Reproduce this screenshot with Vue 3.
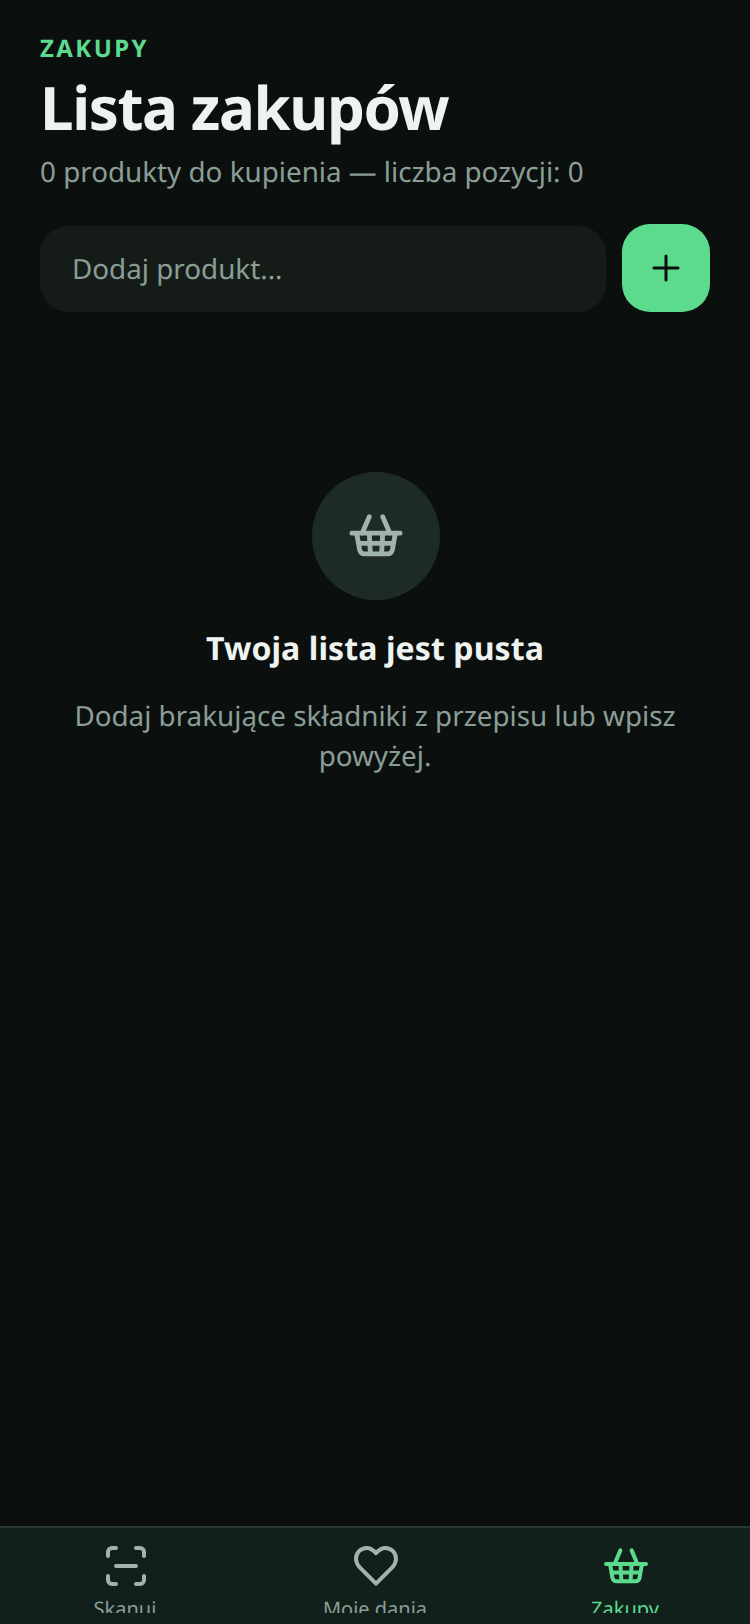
<template>
  <div class="screen">
    <main class="content">
      <header class="page-header">
        <div class="eyebrow">ZAKUPY</div>
        <h1 class="page-title">Lista zakupów</h1>
        <p class="page-sub">0 produkty do kupienia — liczba pozycji: 0</p>
      </header>

      <form class="add-row" @submit.prevent>
        <input v-model="draft" class="add-input" type="text" placeholder="Dodaj produkt..." />
        <button class="add-button" type="submit" aria-label="Dodaj">
          <svg width="28" height="28" viewBox="0 0 28 28" fill="none" stroke="#0a0f0e" stroke-width="3" stroke-linecap="round">
            <path d="M14 2v24M2 14h24" />
          </svg>
        </button>
      </form>

      <section class="empty">
        <div class="empty-circle">
          <svg class="basket" width="58" height="58" viewBox="0 0 24 24" fill="none" stroke="currentColor" stroke-width="2" stroke-linecap="round" stroke-linejoin="round">
            <path :d="basketPath" />
          </svg>
        </div>
        <h2 class="empty-title">Twoja lista jest pusta</h2>
        <p class="empty-text">Dodaj brakujące składniki z przepisu lub wpisz powyżej.</p>
      </section>
    </main>

    <nav class="tabbar">
      <div v-for="tab in tabs" :key="tab.id" class="tab" :class="{ active: tab.id === 'list' }">
        <svg class="tab-icon" width="48" height="48" viewBox="0 0 24 24" fill="none" stroke="currentColor" stroke-width="2" stroke-linecap="round" stroke-linejoin="round">
          <path :d="tab.icon" />
        </svg>
        <span class="tab-label">{{ tab.label }}</span>
      </div>
    </nav>
  </div>
</template>

<script setup>
import { ref } from 'vue'

const draft = ref('')

const basketPath = 'M6.3 10 9.2 3.2M17.700 10 14.800 3.200M2 10h20M4 10l1.200 6.800a2 2 0 0 0 2 1.800h9.600a2 2 0 0 0 2-1.800L20 10M4.800 14.200h14.400M9.200 10l.5 8.600M14.800 10l-.5 8.600'

const tabs = [
  { id: 'scan', label: 'Skanuj', icon: 'M3 6V4a2 2 0 0 1 2-2h2M17 2h2a2 2 0 0 1 2 2v2M21 16v2a2 2 0 0 1-2 2h-2M7 20H5a2 2 0 0 1-2-2v-2M7 11h10' },
  { id: 'saved', label: 'Moje dania', icon: 'M12 4.600C10.600 3 9 2 7.400 2 4.300 2 2 4.400 2 7.400c0 1.800.8 3.200 2 4.400l8 8 8-8c1.200-1.200 2-2.600 2-4.400C22 4.400 19.700 2 16.600 2 15 2 13.400 3 12 4.600z' },
  { id: 'list', label: 'Zakupy', icon: basketPath }
]
</script>

<style>
html, body {
  margin: 0;
  background: #0b100f;
}
</style>

<style scoped>
.screen {
  width: 750px;
  height: 1624px;
  display: flex;
  flex-direction: column;
  background: #0b100f;
  font-family: "Noto Sans", sans-serif;
  text-rendering: geometricPrecision;
  overflow: hidden;
}

.content {
  flex: 1;
  min-height: 0;
  padding: 34px 40px 0;
}

.eyebrow {
  font-size: 24px;
  line-height: 30px;
  font-weight: 700;
  letter-spacing: 2.4px;
  color: #5cdb8f;
}

.page-title {
  margin: 7px 0 0;
  font-size: 60px;
  line-height: 72px;
  font-weight: 700;
  letter-spacing: -1.4px;
  color: #eef3ef;
}

.page-sub {
  margin: 9px 0 0;
  font-size: 27.8px;
  line-height: 40px;
  color: #8a9e96;
}

.add-row {
  display: flex;
  align-items: flex-end;
  gap: 16px;
  margin-top: 32px;
}

.add-input {
  flex: 1;
  min-width: 0;
  height: 86px;
  box-sizing: border-box;
  padding: 0 32px;
  border: none;
  border-radius: 28px;
  background: #151c18;
  color: #eef3ef;
  font-family: inherit;
  font-size: 27.8px;
  text-rendering: geometricPrecision;
  outline: none;
}

.add-input::placeholder {
  color: #8a9e96;
  opacity: 1;
}

.add-button {
  width: 88px;
  height: 88px;
  flex-shrink: 0;
  display: flex;
  align-items: center;
  justify-content: center;
  padding: 0;
  border: none;
  border-radius: 28px;
  background: #5cdb8f;
}

.empty {
  display: flex;
  flex-direction: column;
  align-items: center;
  margin-top: 160px;
  padding: 0 20px;
  text-align: center;
}

.empty-circle {
  width: 128px;
  height: 128px;
  margin-left: 2px;
  display: flex;
  align-items: center;
  justify-content: center;
  border-radius: 50%;
  background: #1e2a25;
  color: #a0b4ac;
}

.basket {
  margin-top: 4px;
}

.empty-title {
  margin: 27px 0 0;
  font-size: 32px;
  line-height: 44px;
  font-weight: 700;
  letter-spacing: 0.1px;
  color: #f0f4f1;
}

.empty-text {
  margin: 25px 0 0;
  font-size: 27.8px;
  line-height: 40px;
  color: #8a9e96;
}

.tabbar {
  height: 96px;
  flex-shrink: 0;
  display: grid;
  grid-template-columns: repeat(3, 1fr);
  border-top: 2px solid #2a3a33;
  background: #12201b;
}

.tab {
  height: 85px;
  padding-top: 16px;
  box-sizing: border-box;
  display: flex;
  flex-direction: column;
  align-items: center;
  overflow: hidden;
  color: #a0b4ac;
}

.tab.active {
  color: #5cdb8f;
}

.tab-icon {
  flex-shrink: 0;
  margin-left: 2px;
}

.tab-label {
  margin-top: 3px;
  font-size: 20px;
  line-height: 28px;
  color: #8a9e96;
}

.tab.active .tab-label {
  color: #5cdb8f;
}
</style>
